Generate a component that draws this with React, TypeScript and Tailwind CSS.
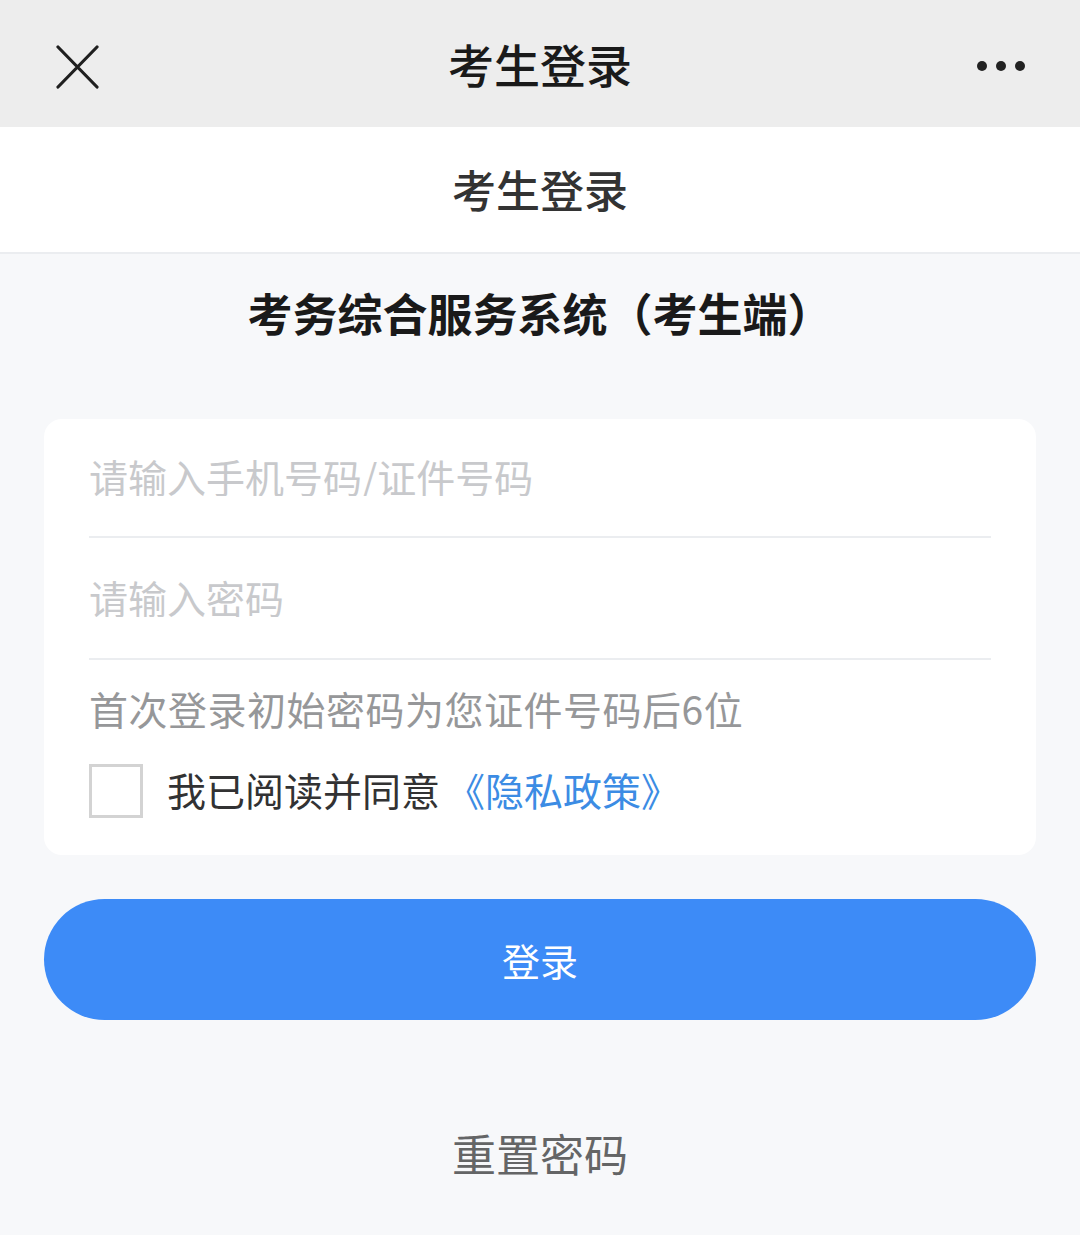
const font = {
  fontFamily: '"Noto Sans CJK SC", "Noto Sans", sans-serif',
};

function CloseIcon() {
  return (
    <svg width="44" height="44" viewBox="0 0 44 44" fill="none">
      <path d="M2 2L41 42M41 2L2 42" stroke="#1f1f1f" strokeWidth="3.2" strokeLinecap="round" />
    </svg>
  );
}

function MoreIcon() {
  return (
    <svg width="52" height="12" viewBox="0 0 52 12" fill="#222">
      <circle cx="6" cy="6" r="5" />
      <circle cx="25" cy="6" r="5" />
      <circle cx="44" cy="6" r="5" />
    </svg>
  );
}

export default function App() {
  return (
    <div className="min-h-[1235px] w-[1080px] bg-[#f7f8fa] text-[#323233]" style={font}>
      {/* top navigation */}
      <div className="relative flex h-[127px] items-center justify-center bg-[#ededed]">
        <div className="absolute left-[56px] top-[45px]">
          <CloseIcon />
        </div>
        <h1 className="-mt-[2px] text-[46px] font-medium leading-none text-[#1a1a1a]">考生登录</h1>
        <div className="absolute right-[52px] top-[60px]">
          <MoreIcon />
        </div>
      </div>

      {/* page header */}
      <div className="flex h-[127px] items-center justify-center border-b-2 border-[#ebedf0] bg-white">
        <h2 className="-mt-[2px] text-[44px] font-medium leading-none text-[#333]">考生登录</h2>
      </div>

      <div className="px-[44px]">
        <h3 className="mt-[36px] text-center text-[45px] font-bold leading-[45px] text-[#1a1a1a]">
          考务综合服务系统（考生端）
        </h3>

        <div className="mt-[84px] rounded-[18px] bg-white px-[45px] pb-[37px]">
          <div className="flex h-[119px] items-center border-b-2 border-[#ebedf0]">
            <input
              className="-mt-[4px] w-full bg-transparent text-[39px] leading-[40px] text-[#323233] outline-none placeholder:text-[#c8c9cc]"
              placeholder="请输入手机号码/证件号码"
              style={font}
            />
          </div>
          <div className="flex h-[122px] items-center border-b-2 border-[#ebedf0]">
            <input
              type="password"
              className="-mt-[2px] w-full bg-transparent text-[39px] leading-[40px] text-[#323233] outline-none placeholder:text-[#c8c9cc]"
              placeholder="请输入密码"
              style={font}
            />
          </div>
          <p className="mt-[28px] text-[39px] leading-[40px] tracking-[0.5px] text-[#969799]">首次登录初始密码为您证件号码后6位</p>
          <label className="mt-[36px] flex items-center">
            <span className="h-[54px] w-[54px] shrink-0 border-[3px] border-[#d3d3d3] bg-white" />
            <span className="-mt-[4px] ml-[24px] text-[39px] leading-[40px] text-[#323233]">我已阅读并同意</span>
            <span className="-mt-[4px] ml-[6px] text-[39px] leading-[40px] text-[#3c8ce4]">《隐私政策》</span>
          </label>
        </div>

        <button
          className="mt-[44px] flex h-[121px] w-full items-center justify-center rounded-full bg-[#3d8bf7] text-[38px] leading-none text-white"
          style={font}
        >
          登录
        </button>

        <p className="mt-[111px] text-center text-[44px] leading-[44px] text-[#646566]">重置密码</p>
      </div>
    </div>
  );
}
